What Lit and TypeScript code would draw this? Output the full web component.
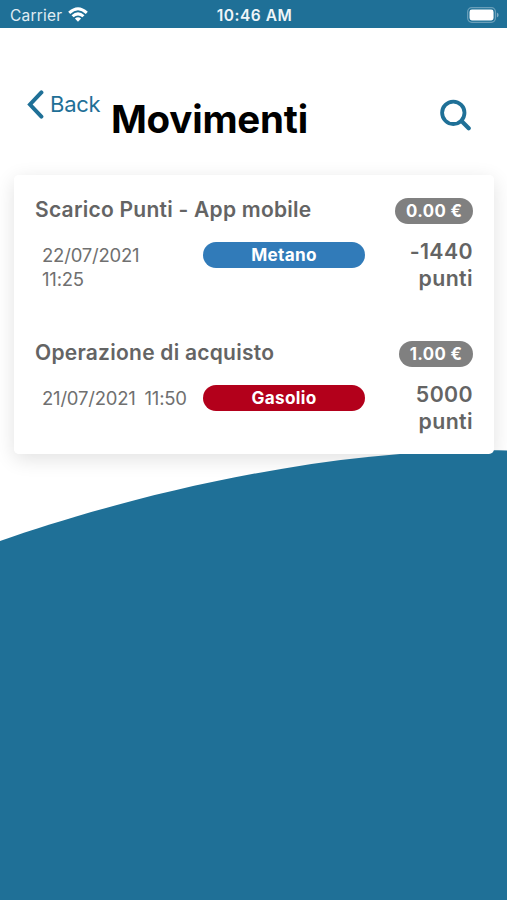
import { LitElement, html, css } from "lit";
import { customElement, property } from "lit/decorators.js";

@customElement("status-bar")
class StatusBar extends LitElement {
  static styles = css`
    :host { display: grid; grid-template-columns: 1fr auto 1fr; align-items: center; height: 28px; padding: 1px 8px 0 10px; box-sizing: border-box; background: #1f7097; color: #fff; font-size: 15.5px; }
    .left { display: flex; align-items: center; gap: 6px; color: #e0edf3; letter-spacing: 0.2px; }
    .left span { padding-top: 2px; }
    .time { font-weight: 600; font-size: 15.5px; letter-spacing: 0.5px; color: #eef5f8; padding-top: 2px; }
    .battery { justify-self: end; }
    svg { display: block; }
  `;
  render() {
    return html`
      <div class="left">
        <span>Carrier</span>
        <svg width="20" height="15" viewBox="0 0 20 15">
          <path d="M0.2 4.8Q10-4.2 19.8 4.8L17.8 6.9Q10-.2 2.2 6.9Z" fill="#fff"/>
          <path d="M3.5 8.2Q10 2.4 16.5 8.2L14.4 10.3Q10 6.5 5.6 10.3Z" fill="#fff"/>
          <path d="M6.9 11.5Q10 8.8 13.1 11.5L10 14.7Z" fill="#fff"/>
        </svg>
      </div>
      <div class="time">10:46 AM</div>
      <svg class="battery" width="32" height="16" viewBox="0 0 33 16" preserveAspectRatio="none">
        <rect x=".7" y=".7" width="28.6" height="14.6" rx="4.2" fill="none" stroke="#6a9fb9" stroke-width="1.3"/>
        <rect x="2.6" y="2.6" width="24.8" height="10.8" rx="2.4" fill="#fff"/>
        <path d="M30.8 5.5Q32.6 6.3 32.6 8T30.8 10.5Z" fill="#7facc3"/>
      </svg>
    `;
  }
}

@customElement("page-header")
class PageHeader extends LitElement {
  static styles = css`
    :host { display: flex; align-items: flex-start; height: 147px; box-sizing: border-box; padding: 62px 35px 0 27px; color: #1f7097; }
    .back { display: flex; align-items: center; height: 29px; gap: 6px; font-size: 22px; }
    .label { letter-spacing: -0.25px; line-height: 27px; padding-bottom: 0.5px; }
    h1 { margin: 6px 0 0 10.5px; font-size: 38.5px; line-height: 46px; font-weight: 700; letter-spacing: -0.2px; color: #000; }
    .search { margin: 9px 0 0 auto; }
    svg { display: block; }
  `;
  render() {
    return html`
      <div class="back">
        <svg width="17" height="29" viewBox="0 0 17 29">
          <path d="M14.4 2.4L3 14.5L14.4 26.6" fill="none" stroke="currentColor" stroke-width="4" stroke-linecap="round" stroke-linejoin="miter"/>
        </svg>
        <span class="label">Back</span>
      </div>
      <h1>Movimenti</h1>
      <svg class="search" width="32" height="32" viewBox="0 0 32 32">
        <circle cx="13.3" cy="13.8" r="11.2" fill="none" stroke="currentColor" stroke-width="3.8"/>
        <path d="M21.5 22.1L28.7 29.3" stroke="currentColor" stroke-width="4.2" stroke-linecap="round"/>
      </svg>
    `;
  }
}

@customElement("movement-item")
class MovementItem extends LitElement {
  @property() name = "";
  @property() amount = "";
  @property() date = "";
  @property() fuel = "";
  @property() points = "";
  static styles = css`
    :host { display: block; height: 143px; box-sizing: border-box; padding: 22px 21px 0; color: #646464; }
    .top { display: flex; justify-content: space-between; align-items: flex-start; height: 40px; }
    .name { font-size: 21px; font-weight: 600; line-height: 25px; letter-spacing: 0.25px; white-space: nowrap; }
    .amount { margin-top: 1px; height: 26px; line-height: 26px; padding: 0 10.5px 0 11px; border-radius: 13px; background: #808080; color: #fff; font-size: 16.8px; font-weight: 700; letter-spacing: 0.4px; white-space: nowrap; }
    .bottom { display: grid; grid-template-columns: 161px 162px 1fr; align-items: start; }
    .date { padding: 6px 0 0 7px; font-size: 18.5px; line-height: 24px; letter-spacing: -0.2px; word-spacing: 3.8px; color: #707070; white-space: pre-line; }
    .fuel { margin: 5px 0 0 7px; height: 26px; line-height: 26px; width: 162px; border-radius: 13px; text-align: center; color: #fff; background: #317bb9; font-size: 17.2px; font-weight: 700; letter-spacing: 0.3px; }
    .fuel.gasolio { background: #b3001b; }
    .points { width: 70px; justify-self: end; text-align: right; font-size: 21.3px; font-weight: 600; line-height: 27px; letter-spacing: 0.4px; padding-top: 1px; }
  `;
  render() {
    return html`
      <div class="top">
        <div class="name">${this.name}</div>
        <div class="amount">${this.amount}</div>
      </div>
      <div class="bottom">
        <div class="date">${this.date}</div>
        <div class="fuel ${this.fuel.toLowerCase()}">${this.fuel}</div>
        <div class="points">${this.points}</div>
      </div>
    `;
  }
}

@customElement("app-root")
class AppRoot extends LitElement {
  static styles = css`
    :host { display: block; position: relative; isolation: isolate; height: 900px; overflow: hidden; background: #fff; font-family: Inter, "Liberation Sans", sans-serif; }
    .wave { position: absolute; inset: 0; z-index: -1; display: block; }
    .card { position: relative; margin: 0 13px 0 14px; height: 279px; border-radius: 5px; background: #fff; }
    .card::before { content: ""; position: absolute; inset: 0; z-index: -2; border-radius: 5px; box-shadow: 0 5px 20px rgba(0, 0, 0, 0.12); }
  `;
  render() {
    return html`
      <svg class="wave" width="507" height="900" viewBox="0 0 507 900">
        <path d="M0 541C120 499 320 447 507 450.5V900H0Z" fill="#1f7097"/>
      </svg>
      <status-bar></status-bar>
      <page-header></page-header>
      <div class="card">
        <movement-item name="Scarico Punti - App mobile" amount="0.00 €" .date=${"22/07/2021\n11:25"} fuel="Metano" points="-1440 punti"></movement-item>
        <movement-item name="Operazione di acquisto" amount="1.00 €" .date=${"21/07/2021 11:50"} fuel="Gasolio" points="5000 punti"></movement-item>
      </div>
    `;
  }
}
